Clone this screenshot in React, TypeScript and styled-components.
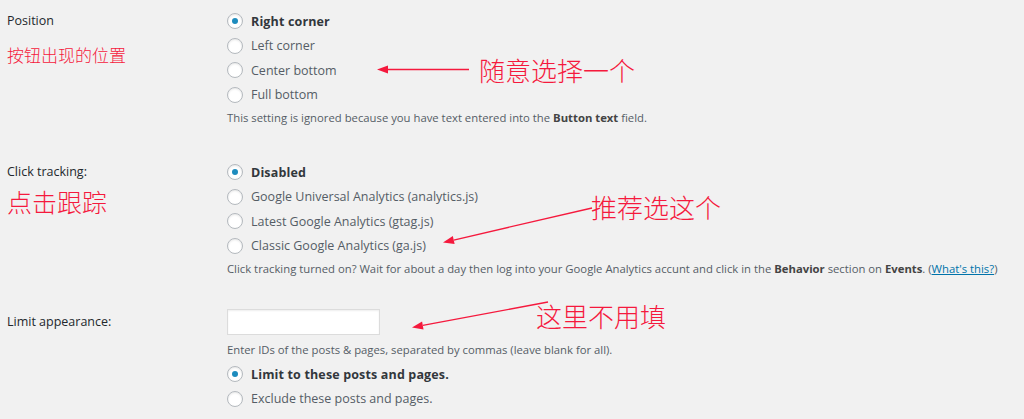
import React from 'react';
import styled, { createGlobalStyle } from 'styled-components';

const GlobalStyle = createGlobalStyle`
  html, body {
    margin: 0;
    padding: 0;
    background: #f1f1f1;
  }
  body {
    font-family: "Open Sans", "Noto Sans", sans-serif;
    color: #23282d;
  }
`

const RED = '#f5193d';

const Page = styled.div`
  position: relative;
  width: 1024px;
  height: 419px;
  overflow: hidden;
  background: #f1f1f1;
`

const Form = styled.div`
  display: flex;
  flex-direction: column;
  padding: 9px 0 0 7px;
`

const Row = styled.div<{ $gap?: number }>`
  display: grid;
  grid-template-columns: 220px 1fr;
  margin-top: ${(p) => p.$gap ?? 0}px;
`

const LabelCell = styled.div`
  display: flex;
  flex-direction: column;
`

const FieldLabel = styled.div<{ $lh?: number }>`
  font-size: 12.5px;
  line-height: ${(p) => p.$lh ?? 24.5}px;
  color: #23282d;
`

const Note = styled.div<{ $size: number; $top: number }>`
  font-family: "Noto Sans CJK SC", sans-serif;
  font-weight: 300;
  color: ${RED};
  font-size: ${(p) => p.$size}px;
  line-height: ${(p) => p.$size + 8}px;
  margin-top: ${(p) => p.$top}px;
`

const Options = styled.div`
  display: flex;
  flex-direction: column;
`

const Option = styled.label<{ $checked?: boolean }>`
  display: flex;
  align-items: center;
  gap: 8px;
  height: 24.5px;
  font-size: 12.5px;
  color: ${(p) => (p.$checked ? '#32373c' : '#555d66')};
  font-weight: ${(p) => (p.$checked ? 700 : 400)};
  letter-spacing: ${(p) => (p.$checked ? '0.15px' : '0')};
`

const Radio = styled.span<{ $checked?: boolean }>`
  flex: none;
  width: 14px;
  height: 14px;
  border-radius: 50%;
  border: 1px solid #b4b9be;
  background: #fff;
  box-shadow: inset 0 1px 2px rgba(0, 0, 0, 0.1);
  display: flex;
  align-items: center;
  justify-content: center;

  &::after {
    content: '';
    display: ${(p) => (p.$checked ? 'block' : 'none')};
    width: 6px;
    height: 6px;
    border-radius: 50%;
    background: #1e8cbe;
  }
`

const Desc = styled.div<{ $top?: number; $bottom?: number }>`
  font-size: 11.3px;
  line-height: 16px;
  color: #555d66;
  margin-top: ${(p) => p.$top ?? 3}px;
  margin-bottom: ${(p) => p.$bottom ?? 0}px;
  white-space: nowrap;

  b {
    font-weight: 700;
    color: #444;
  }
  a {
    color: #0073aa;
    text-decoration: underline;
  }
`

const TextInput = styled.div`
  width: 151px;
  height: 24px;
  background: #fff;
  border: 1px solid #dcdcdc;
  box-shadow: inset 0 1px 2px rgba(0, 0, 0, 0.07);
`

const Callout = styled.div<{ $x: number; $y: number }>`
  position: absolute;
  left: ${(p) => p.$x}px;
  top: ${(p) => p.$y}px;
  font-family: "Noto Sans CJK SC", sans-serif;
  font-weight: 300;
  font-size: 26px;
  line-height: 30px;
  color: ${RED};
  white-space: nowrap;
`

const Overlay = styled.svg`
  position: absolute;
  left: 0;
  top: 0;
  pointer-events: none;
`

function Arrow({ x1, y1, x2, y2 }: { x1: number; y1: number; x2: number; y2: number }) {
  const a = Math.atan2(y2 - y1, x2 - x1);
  const len = 11;
  const w = 4;
  const bx = x2 - len * Math.cos(a);
  const by = y2 - len * Math.sin(a);
  const px = -Math.sin(a) * w;
  const py = Math.cos(a) * w;
  return (
    <g>
      <line x1={x1} y1={y1} x2={bx} y2={by} stroke={RED} strokeWidth={1.3} />
      <polygon points={`${x2},${y2} ${bx + px},${by + py} ${bx - px},${by - py}`} fill={RED} />
    </g>
  );
}

function RadioOption({ label, checked }: { label: string; checked?: boolean }) {
  return (
    <Option $checked={checked}>
      <Radio $checked={checked} />
      {label}
    </Option>
  );
}

export default function App() {
  return (
    <Page>
      <GlobalStyle />
      <Form>
        <Row>
          <LabelCell>
            <FieldLabel>Position</FieldLabel>
            <Note $size={17} $top={8}>按钮出现的位置</Note>
          </LabelCell>
          <Options>
            <RadioOption label="Right corner" checked />
            <RadioOption label="Left corner" />
            <RadioOption label="Center bottom" />
            <RadioOption label="Full bottom" />
            <Desc>
              This setting is ignored because you have text entered into the <b>Button text</b> field.
            </Desc>
          </Options>
        </Row>

        <Row $gap={34}>
          <LabelCell>
            <FieldLabel>Click tracking:</FieldLabel>
            <Note $size={25} $top={0}>点击跟踪</Note>
          </LabelCell>
          <Options>
            <RadioOption label="Disabled" checked />
            <RadioOption label="Google Universal Analytics (analytics.js)" />
            <RadioOption label="Latest Google Analytics (gtag.js)" />
            <RadioOption label="Classic Google Analytics (ga.js)" />
            <Desc>
              Click tracking turned on? Wait for about a day then log into your Google Analytics accunt and
              click in the <b>Behavior</b> section on <b>Events</b>. (<a>What's this?</a>)
            </Desc>
          </Options>
        </Row>

        <Row $gap={32}>
          <LabelCell>
            <FieldLabel $lh={26}>Limit appearance:</FieldLabel>
          </LabelCell>
          <Options>
            <TextInput />
            <Desc $top={7} $bottom={4}>
              Enter IDs of the posts &amp; pages, separated by commas (leave blank for all).
            </Desc>
            <RadioOption label="Limit to these posts and pages." checked />
            <RadioOption label="Exclude these posts and pages." />
          </Options>
        </Row>
      </Form>

      <Callout $x={479} $y={55}>随意选择一个</Callout>
      <Callout $x={591} $y={192}>推荐选这个</Callout>
      <Callout $x={536} $y={301}>这里不用填</Callout>

      <Overlay width={1024} height={419} viewBox="0 0 1024 419">
        <Arrow x1={469} y1={69.5} x2={377} y2={69.5} />
        <Arrow x1={592} y1={208} x2={443} y2={242.5} />
        <Arrow x1={548} y1={302} x2={412} y2={327.5} />
      </Overlay>
    </Page>
  );
}
